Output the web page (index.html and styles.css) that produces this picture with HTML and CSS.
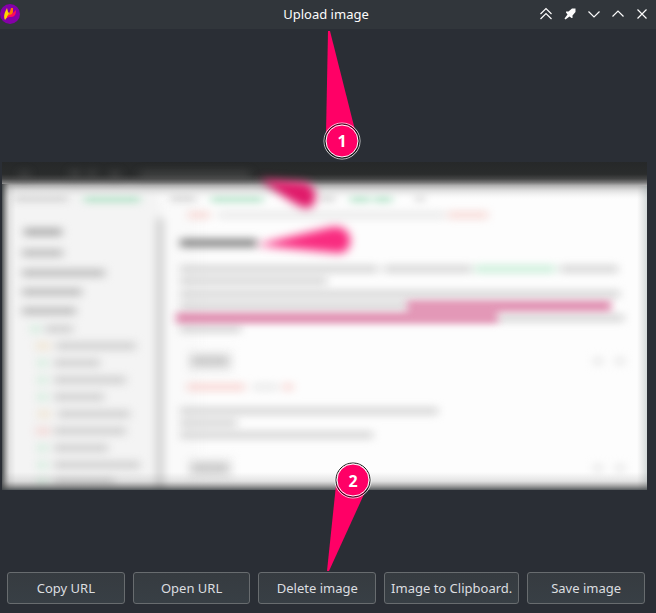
FILE: index.html
```html
<!DOCTYPE html>
<html lang="en">
<head>
<meta charset="utf-8">
<title>Upload image</title>
<link rel="stylesheet" href="styles.css">
</head>
<body>
<div class="window">
  <header class="titlebar">
    <svg class="app-icon" viewBox="0 0 20 20" aria-hidden="true">
      <circle cx="10" cy="10" r="10" fill="#8500a8"/>
      <path d="M5 16C3 12 5 8 7 4l1 4 1 1c0 3-2 4-4 7z" fill="#ffd600"/>
      <path d="M7 13c1-3 3-4 4-9l2 0v4l-1 3-4 2z" fill="#ff7800"/>
      <path d="M7 14c0-3 3-3 5-4l4-4c0 4-1 7-5 7H9l-2 1z" fill="#ff0a5c"/>
    </svg>
    <h1 class="title">Upload image</h1>
    <div class="controls">
      <button class="control" type="button" aria-label="Keep above"><svg viewBox="0 0 16 16"><path d="M2.500 8 8 2.500 13.500 8M2.500 13 8 7.500 13.500 13"/></svg></button>
      <button class="control" type="button" aria-label="Pin"><svg viewBox="0 0 16 16"><path class="solid" d="M10 2.500h3.500V6L10.500 9.500v2.500h-1L7.500 10.500 3.500 13.500 2.500 12.500 5.500 8.500 4 6.500v-1h2.500z"/></svg></button>
      <button class="control" type="button" aria-label="Minimize"><svg viewBox="0 0 16 16"><path d="M2.500 5.500 8 11l5.500-5.500"/></svg></button>
      <button class="control" type="button" aria-label="Maximize"><svg viewBox="0 0 16 16"><path d="M2.500 10.500 8 5l5.500 5.500"/></svg></button>
      <button class="control" type="button" aria-label="Close"><svg viewBox="0 0 16 16"><path d="M3.500 3.500l9 9M12.500 3.500l-9 9"/></svg></button>
    </div>
  </header>

  <main class="stage">
    <svg class="preview" viewBox="2 162 645 328" role="img" aria-label="Uploaded screenshot preview">
      <defs>
        <filter id="soft" filterUnits="userSpaceOnUse" x="2" y="150" width="645" height="350" color-interpolation-filters="sRGB"><feGaussianBlur stdDeviation="5 4"/></filter>
        <filter id="band" filterUnits="userSpaceOnUse" x="2" y="150" width="645" height="350" color-interpolation-filters="sRGB"><feGaussianBlur stdDeviation="4 3"/></filter>
        <filter id="mark" filterUnits="userSpaceOnUse" x="2" y="150" width="645" height="350" color-interpolation-filters="sRGB"><feGaussianBlur stdDeviation="5"/></filter>
        <linearGradient id="top" x1="0" y1="0" x2="0" y2="1">
          <stop offset="0" stop-color="#262829"/>
          <stop offset=".32" stop-color="#2a2c2c"/>
          <stop offset=".44" stop-color="#444545"/>
          <stop offset=".54" stop-color="#777"/>
          <stop offset=".62" stop-color="#b0b0b0"/>
          <stop offset=".75" stop-color="#dadada" stop-opacity=".9"/>
          <stop offset="1" stop-color="#f7f7f7" stop-opacity="0"/>
        </linearGradient>
        <linearGradient id="left" x1="0" y1="0" x2="1" y2="0">
          <stop offset="0" stop-color="#333839" stop-opacity=".85"/>
          <stop offset=".3" stop-color="#555" stop-opacity=".45"/>
          <stop offset=".55" stop-color="#888" stop-opacity=".18"/>
          <stop offset="1" stop-color="#999" stop-opacity="0"/>
        </linearGradient>
        <linearGradient id="bottom" x1="0" y1="0" x2="0" y2="1">
          <stop offset="0" stop-color="#888" stop-opacity="0"/>
          <stop offset=".5" stop-color="#777" stop-opacity=".2"/>
          <stop offset=".75" stop-color="#555" stop-opacity=".5"/>
          <stop offset="1" stop-color="#3b4144" stop-opacity=".85"/>
        </linearGradient>
        <linearGradient id="right" x1="0" y1="0" x2="1" y2="0">
          <stop offset="0" stop-color="#999" stop-opacity="0"/>
          <stop offset="1" stop-color="#899" stop-opacity=".35"/>
        </linearGradient>
      </defs>
      <path fill="#fdfdfd" d="M2 162h645v328H2z"/>
      <g filter="url(#mark)">
        <path fill="#f4f4f4" d="M2 176h159v320H2z"/>
        <path fill="#fafafa" d="M161 200h40v290h-40z"/>
        <path fill="none" stroke="#c4c4c4" stroke-width="6" d="M160 218v290"/>
        <path fill="#ebebeb" d="M188 351h44v21h-44zM188 458h44v21h-44z"/>
      </g>
      <g filter="url(#soft)" fill="none" stroke-width="7">
        <path stroke="#a4a4a4" d="M24 232h38"/>
        <path stroke="#b8b8b8" d="M22 253h41M22 273h83M22 292h60M22 311h54"/>
        <path stroke="#ccc" d="M45 329h28M56 346h80M54 363h46M54 380h72M54 397h50M58 414h72M54 431h72M54 448h54M54 465h86M54 482h60"/>
        <path stroke="#cdecd9" d="M31 329h9M38 363h9M38 380h9M38 397h9M38 448h9M38 465h9M38 482h9"/>
        <path stroke="#f0e4d0" d="M36 346h14M38 414h12"/>
        <path stroke="#f3d6d3" d="M36 431h14"/>
        <path stroke="#ccc" d="M14 197h54M170 197h26M320 197h15M416 197h8"/>
        <path stroke="#a9dfc1" d="M84 198h56M211 198h52M350 198h20M374 198h18"/>
        <path stroke="#f6d3cf" stroke-width="6" d="M188 215h22M448 215h40"/>
        <path stroke="#e2e2e2" stroke-width="5" d="M218 215h228"/>
        <path stroke="#808080" stroke-width="8" d="M180 243h77"/>
        <path stroke="#ccc" stroke-width="6" d="M180 269h198M384 269h88M560 269h58M180 281h147M180 294h440M180 306h228M498 318h126M180 329h61"/>
        <path stroke="#bdebd0" stroke-width="6" d="M475 269h80"/>
        <path stroke="#c0c0c0" stroke-width="7" d="M192 361h36M192 468h36"/>
        <path stroke="#e2e2e2" d="M594 361h8M616 361h8M594 468h8M616 468h8"/>
        <path stroke="#f8cfcc" stroke-width="6" d="M187 387h58M283 387h10"/>
        <path stroke="#e2e2e2" stroke-width="5" d="M253 387h25"/>
        <path stroke="#ccc" stroke-width="6" d="M180 411h258M180 423h57M180 435h193"/>
      </g>
      <path filter="url(#band)" fill="#d8709b" fill-opacity=".72" d="M407 300h204v12H498v12H176v-12h231z"/>
      <path fill="url(#top)" d="M2 162h645v38H2z"/>
      <g filter="url(#soft)" fill="none">
        <path stroke="#666" stroke-opacity=".5" stroke-width="6" d="M20 175h9M70 174h10M88 174h8M110 175h10M140 175h110"/>
      </g>
      <g filter="url(#mark)" fill="#e01a6a">
        <path d="M260 179 302 182C321 184 319 211 304 208 290 202 276 191 260 179z"/>
        <path fill="#f92c80" d="M256 245 332 227C355 223 356 255 337 253z"/>
      </g>
      <path fill="url(#left)" d="M2 184h14v306H2z"/>
      <path fill="url(#right)" d="M637 186h10v304h-10z"/>
      <path fill="url(#bottom)" d="M2 472h645v18H2z"/>
    </svg>

    <svg class="callout callout-one" viewBox="322 30 40 130" role="img" aria-label="Step 1">
      <path class="pointer" d="M328 31h2l26 103-15 7-15-7z"/>
      <circle class="halo" cx="342" cy="141" r="18"/>
      <circle class="ring" cx="342" cy="141" r="17"/>
      <circle class="disc" cx="342" cy="141" r="16"/>
      <text class="number" x="342" y="147">1</text>
    </svg>
    <svg class="callout callout-two" viewBox="322 460 50 112" role="img" aria-label="Step 2">
      <path class="pointer" d="M327 571h2l36-79-12-11-17 4z"/>
      <circle class="halo" cx="353" cy="480" r="18"/>
      <circle class="ring" cx="353" cy="480" r="17"/>
      <circle class="disc" cx="353" cy="480" r="16"/>
      <text class="number" x="353" y="487">2</text>
    </svg>
  </main>

  <footer class="actions">
    <button class="action" type="button">Copy URL</button>
    <button class="action" type="button">Open URL</button>
    <button class="action" type="button">Delete image</button>
    <button class="action" type="button">Image to Clipboard.</button>
    <button class="action" type="button">Save image</button>
  </footer>
</div>
</body>
</html>
```

FILE: styles.css
```css
* {
  box-sizing: border-box;
}

body {
  margin: 0;
  background: #2a2e35;
  color: #fcfcfc;
  font-family: "Noto Sans", sans-serif;
  font-size: 13px;
}

.window {
  display: flex;
  flex-direction: column;
  min-height: 100vh;
}

.titlebar {
  display: grid;
  grid-template-columns: 1fr auto 1fr;
  align-items: center;
  height: 29px;
  padding: 0 4px 1px 0;
  background: #31363b;
}

.app-icon {
  width: 20px;
  height: 20px;
}

.title {
  margin: 0;
  font-size: 13px;
  font-weight: 400;
  line-height: 20px;
}

.controls {
  display: flex;
  justify-content: flex-end;
  gap: 4px;
}

.control {
  width: 20px;
  height: 20px;
  padding: 2px;
  border: 0;
  background: none;
}

.control svg {
  display: block;
  width: 16px;
  height: 16px;
  fill: none;
  stroke: #fcfcfc;
  stroke-width: 1.2;
}

.control .solid {
  fill: #fcfcfc;
  stroke: none;
}

.stage {
  position: relative;
  flex: 1;
  padding: 133px 9px 80px 2px;
}

.preview {
  display: block;
  width: 100%;
}

/* Numbered pointers float over the preview and the action row. */
.callout {
  position: absolute;
  pointer-events: none;
}

.callout-one {
  top: 1px;
  left: calc(50% - 6px);
  width: 40px;
  height: 130px;
}

.callout-two {
  bottom: 0;
  left: calc(50% - 6px);
  width: 50px;
  height: 112px;
}

.pointer,
.disc {
  fill: #ff0066;
}

.halo,
.disc {
  stroke: #fff;
  stroke-width: 1;
}

.halo {
  fill: none;
  stroke-opacity: 0.8;
}

.ring {
  fill: none;
  stroke: #111;
  stroke-width: 1;
}

.number {
  fill: #fff;
  font-size: 16px;
  font-weight: 700;
  text-anchor: middle;
}

.actions {
  display: flex;
  gap: 8px;
  padding: 0 11px 9px 7px;
}

.action {
  flex: 1 1 0;
  height: 32px;
  padding: 0 6px;
  border: 1px solid #686c6f;
  border-radius: 3px;
  background: linear-gradient(#363b40, #383f45);
  color: #dcdee0;
  font: inherit;
  white-space: nowrap;
}
```
